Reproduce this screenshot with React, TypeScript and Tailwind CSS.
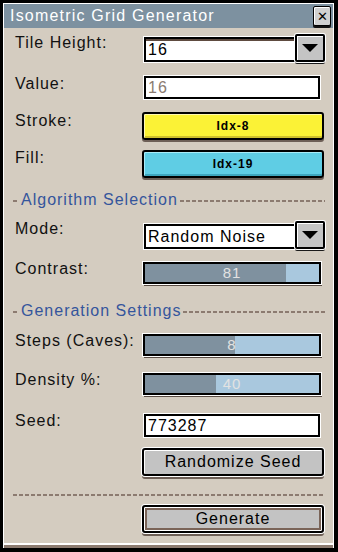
import React from 'react';

const FONT = "font-['Liberation_Sans',Arial,sans-serif]";

function Label({ text, offset }: { text: string; offset: string }) {
  return (
    <div className={`w-[127px] shrink-0 text-[16px] leading-[16px] tracking-[1px] text-[#111] ${offset}`}>{text}</div>
  );
}

function Triangle() {
  return <div className="w-0 h-0 border-l-[8px] border-r-[8px] border-t-[8px] border-l-transparent border-r-transparent border-t-black" />;
}

function Select({ value, topShade }: { value: string; topShade?: boolean }) {
  return (
    <div className="flex items-start w-[183px]">
      <div
        className={`ml-[2px] mt-[3px] w-[153px] h-[25px] bg-white border-2 border-black pl-[2px] flex items-center text-[16px] tracking-[1px] text-black ${
          topShade ? 'shadow-[0_0_0_1px_#fff,inset_0_2px_0_#5e4b40]' : 'shadow-[0_0_0_1px_#fff]'
        }`}
      >
        {value}
      </div>
      <div className="-ml-[2px] w-[30px] h-[28px] bg-[#c4c4c4] border-2 border-black rounded-[2px] flex items-center justify-center shadow-[0_0_0_1px_#fff,inset_1px_1px_0_#fff,0_2px_0_#1a1a1a]">
        <Triangle />
      </div>
    </div>
  );
}

function TextInput({ value, muted }: { value: string; muted?: boolean }) {
  return (
    <div
      className={`ml-[2px] w-[176px] h-[23px] bg-white border-2 border-black pl-[2px] flex items-center text-[16px] tracking-[1px] shadow-[0_0_0_1px_#fff] ${
        muted ? 'text-[#8b7b70]' : 'text-black'
      }`}
    >
      {value}
    </div>
  );
}

function ColorButton({ label, bg }: { label: string; bg: string }) {
  return (
    <div className="rounded-[3px] shadow-[0_2px_0_#6d5f56]">
      <div
        className={`w-[182px] h-[28px] border-2 border-black rounded-[3px] flex items-center justify-center text-[12px] font-bold tracking-[1px] text-black ${bg}`}
      >
        {label}
      </div>
    </div>
  );
}

function Slider({ value, fill }: { value: string; fill: number }) {
  return (
    <div className="relative ml-[1px] w-[178px] h-[22px] border-2 border-black bg-[#a9c8de] shadow-[0_0_0_1px_#fff,1px_2px_0_#5a4d45]">
      <div className="h-full bg-[#7f919f]" style={{ width: fill }} />
      <div className="absolute inset-0 flex items-center justify-center text-[15px] tracking-[1px] text-[#e2e2e2]">{value}</div>
    </div>
  );
}

function GrayButton({ label, primary }: { label: string; primary?: boolean }) {
  return (
    <div
      className={`w-[182px] h-[28px] bg-[#c3c3c3] border-2 border-black rounded-[3px] flex items-center justify-center text-[16px] tracking-[1px] text-black ${
        primary
          ? 'shadow-[0_0_0_1px_#fff,inset_0_0_0_1px_#fff,inset_0_0_0_3px_#7a6458,0_3px_0_#6d5f56]'
          : 'shadow-[0_0_0_1px_#fff,inset_1px_1px_0_#fff,0_3px_0_#6d5f56]'
      }`}
    >
      {label}
    </div>
  );
}

const DASH = 'bg-[repeating-linear-gradient(90deg,#8c7b70_0_4px,transparent_4px_6px)]';

function Section({ title, mt }: { title: string; mt: string }) {
  return (
    <div className={`flex items-center h-[16px] -ml-[2px] ${mt}`}>
      <div className="w-[4px] h-[2px] bg-[#8c7b70] mt-[2px]" />
      <div className="ml-[4px] text-[16px] leading-[16px] tracking-[1px] text-[#34559c]">{title}</div>
      <div className={`ml-[2px] flex-1 h-[2px] mt-[2px] ${DASH}`} />
    </div>
  );
}

export default function App() {
  return (
    <div className={`w-[338px] h-[552px] bg-black pt-[3px] pl-[3px] pr-[4px] pb-[4px] ${FONT}`}>
      <div className="flex flex-col h-full bg-[#d4ccc0] border-x border-t border-white">
        {/* Title bar */}
        <div className="h-[24px] bg-[#7d91a0] flex items-center justify-between pl-[6px] pr-[2px]">
          <span className="text-[16px] leading-[16px] tracking-[1.2px] text-white">Isometric Grid Generator</span>
          <div className="w-[18px] h-[20px] bg-[#d0d0d0] border border-black rounded-[2px] flex items-center justify-center shadow-[inset_1px_1px_0_#fff,0_2px_0_#111] text-[13px] leading-none text-black">
            ✕
          </div>
        </div>

        <div className="flex flex-col pl-[11px] pr-[8px]">
          <div className="flex items-start mt-[6px]">
            <Label text="Tile Height:" offset="mt-[1px]" />
            <Select value="16" topShade />
          </div>

          <div className="flex items-start mt-[14px]">
            <Label text="Value:" offset="mt-[0px]" />
            <TextInput value="16" muted />
          </div>

          <div className="flex items-start mt-[13px]">
            <Label text="Stroke:" offset="mt-[1px]" />
            <ColorButton label="Idx-8" bg="bg-[#fbf236] shadow-[inset_1px_1px_0_#fffab0,inset_0_-2px_0_#cfc02c]" />
          </div>

          <div className="flex items-start mt-[10px]">
            <Label text="Fill:" offset="mt-[0px]" />
            <ColorButton label="Idx-19" bg="bg-[#5fcde4] shadow-[inset_1px_1px_0_#a8ecf8,inset_0_-2px_0_#3ea6be]" />
          </div>

          <Section title="Algorithm Selection" mt="mt-[14px]" />

          <div className="flex items-start mt-[13px]">
            <Label text="Mode:" offset="mt-[0px]" />
            <Select value="Random Noise" />
          </div>

          <div className="flex items-start mt-[13px]">
            <Label text="Contrast:" offset="-mt-[1px]" />
            <Slider value="81" fill={141} />
          </div>

          <Section title="Generation Settings" mt="mt-[19px]" />

          <div className="flex items-start mt-[15px]">
            <Label text="Steps (Caves):" offset="-mt-[1px]" />
            <Slider value="8" fill={90} />
          </div>

          <div className="flex items-start mt-[17px]">
            <Label text="Density %:" offset="-mt-[1px]" />
            <Slider value="40" fill={71} />
          </div>

          <div className="flex items-start mt-[19px]">
            <Label text="Seed:" offset="-mt-[1px]" />
            <TextInput value="773287" />
          </div>

          <div className="flex mt-[11px]">
            <div className="w-[127px] shrink-0" />
            <GrayButton label="Randomize Seed" />
          </div>

          <div className={`mt-[18px] ml-[-2px] mr-[1px] h-[2px] ${DASH}`} />

          <div className="flex mt-[9px]">
            <div className="w-[127px] shrink-0" />
            <GrayButton label="Generate" primary />
          </div>
        </div>

        <div className="mt-auto h-[2px] bg-white" />
        <div className="h-[3px] bg-[#8c7b70]" />
      </div>
    </div>
  );
}
